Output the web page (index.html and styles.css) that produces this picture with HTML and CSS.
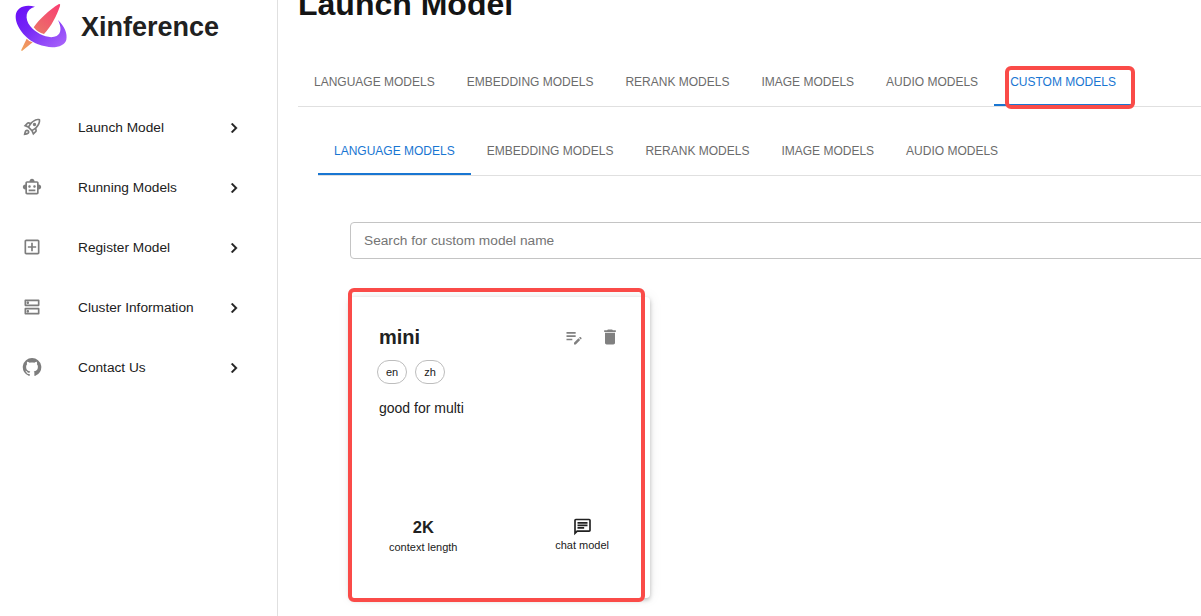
FILE: index.html
```html
<!DOCTYPE html>
<html lang="en">
<head>
<meta charset="utf-8">
<title>Xinference</title>
<link rel="stylesheet" href="styles.css">
</head>
<body>
<div class="app">
  <aside class="sidebar">
    <div class="brand">
      <svg class="logo" viewBox="40 6 165 150">
        <defs>
          <linearGradient id="ring" x1="0" y1="0" x2="1" y2="1"><stop offset="0" stop-color="#6a0cf8"/><stop offset=".4" stop-color="#7527f6"/><stop offset="1" stop-color="#ac68fa"/></linearGradient>
          <linearGradient id="needle" gradientUnits="userSpaceOnUse" x1="178" y1="10" x2="64" y2="152"><stop offset="0" stop-color="#fa3c72"/><stop offset=".5" stop-color="#ed696a"/><stop offset="1" stop-color="#f0a35c"/></linearGradient>
        </defs>
        <path fill="url(#ring)" d="M103 20C72 11 46 23 45 48C44 78 73 118 112 133C151 148 191 143 197 119C201 101 192 80 172 60C183 82 182 100 168 108C145 119 108 102 89 79C71 56 74 27 103 20Z"/>
        <path fill="url(#needle)" d="M175 12Q180 11 178 18C168 48 152 79 130 102Q111 98 99 82C118 56 145 30 175 12ZM78 116Q84 124 96 127L64 153Q61 153 62 149Z"/>
      </svg>
      <span class="brand-name">Xinference</span>
    </div>
    <nav class="menu">
      <a class="item"><svg class="icon" viewBox="0 0 24 24"><path d="M6 15c-.83 0-1.58.34-2.12.88C2.7 17.06 2 22 2 22s4.94-.7 6.12-1.88C8.66 19.58 9 18.83 9 18c0-1.66-1.34-3-3-3zm.71 3.71c-.28.28-2.17.76-2.17.76s.47-1.88.76-2.17c.17-.19.42-.3.7-.3.55 0 1 .45 1 1 0 .28-.11.53-.29.71zm10.71-5.06c6.36-6.36 4.24-11.31 4.24-11.31S16.71.22 10.35 6.58l-2.49-.5c-.65-.13-1.33.08-1.81.55L2 10.69l5 2.14L11.17 17l2.14 5 4.05-4.05c.47-.47.68-1.15.55-1.81l-.49-2.49zM7.41 10.83l-1.91-.82 1.97-1.97 1.44.29c-.57.83-1.08 1.7-1.5 2.5zm6.58 7.67-.82-1.91c.8-.42 1.67-.93 2.49-1.5l.29 1.44-1.96 1.97zM16 12.24c-1.32 1.32-3.38 2.4-4.04 2.73l-2.93-2.93c.32-.65 1.4-2.71 2.73-4.04 4.68-4.68 8.23-3.99 8.23-3.99s.69 3.55-3.99 8.23zM15 11c1.1 0 2-.9 2-2s-.9-2-2-2-2 .9-2 2 .9 2 2 2z"/></svg><span class="label">Launch Model</span><svg class="chevron" viewBox="0 0 24 24"><path d="M10 6 8.59 7.41 13.17 12l-4.58 4.59L10 18l6-6z"/></svg></a>
      <a class="item"><svg class="icon" viewBox="0 0 24 24"><path d="M20 9V7c0-1.1-.9-2-2-2h-3c0-1.66-1.34-3-3-3S9 3.34 9 5H6c-1.1 0-2 .9-2 2v2c-1.66 0-3 1.34-3 3s1.34 3 3 3v4c0 1.1.9 2 2 2h12c1.1 0 2-.9 2-2v-4c1.66 0 3-1.34 3-3s-1.34-3-3-3zm-2 10H6V7h12v12zm-9-6c-.83 0-1.5-.67-1.5-1.5S8.17 10 9 10s1.5.67 1.5 1.5S9.83 13 9 13zm7.5-1.5c0 .83-.67 1.5-1.5 1.5s-1.5-.67-1.5-1.5.67-1.5 1.5-1.5 1.5.67 1.5 1.5zM8 15h8v2H8v-2z"/></svg><span class="label">Running Models</span><svg class="chevron" viewBox="0 0 24 24"><path d="M10 6 8.59 7.41 13.17 12l-4.58 4.59L10 18l6-6z"/></svg></a>
      <a class="item"><svg class="icon" viewBox="0 0 24 24"><path d="M19 3H5c-1.11 0-2 .9-2 2v14c0 1.1.89 2 2 2h14c1.1 0 2-.9 2-2V5c0-1.1-.9-2-2-2zm0 16H5V5h14v14zm-8-2h2v-4h4v-2h-4V7h-2v4H7v2h4z"/></svg><span class="label">Register Model</span><svg class="chevron" viewBox="0 0 24 24"><path d="M10 6 8.59 7.41 13.17 12l-4.58 4.59L10 18l6-6z"/></svg></a>
      <a class="item"><svg class="icon" viewBox="0 0 24 24"><path d="M19 15v4H5v-4h14m1-2H4c-.55 0-1 .45-1 1v6c0 .55.45 1 1 1h16c.55 0 1-.45 1-1v-6c0-.55-.45-1-1-1zM7 18.5c-.82 0-1.5-.67-1.5-1.5s.68-1.5 1.5-1.5 1.5.67 1.5 1.5-.67 1.5-1.5 1.5zM19 5v4H5V5h14m1-2H4c-.55 0-1 .45-1 1v6c0 .55.45 1 1 1h16c.55 0 1-.45 1-1V4c0-.55-.45-1-1-1zM7 8.5c-.82 0-1.5-.67-1.5-1.5S6.18 5.5 7 5.5s1.5.68 1.5 1.5S7.83 8.5 7 8.5z"/></svg><span class="label">Cluster Information</span><svg class="chevron" viewBox="0 0 24 24"><path d="M10 6 8.59 7.41 13.17 12l-4.58 4.59L10 18l6-6z"/></svg></a>
      <a class="item"><svg class="icon" viewBox="0 0 24 24"><path d="M12 1.27a11 11 0 00-3.48 21.46c.55.09.73-.28.73-.55v-1.84c-3.03.64-3.67-1.46-3.67-1.46-.55-1.29-1.28-1.65-1.28-1.65-.92-.65.1-.65.1-.65 1.1 0 1.73 1.1 1.73 1.1.92 1.65 2.57 1.2 3.21.92a2 2 0 01.64-1.47c-2.47-.27-5.04-1.19-5.04-5.5 0-1.1.46-2.1 1.2-2.84a3.76 3.76 0 010-2.93s.91-.28 3.11 1.1c1.8-.49 3.7-.49 5.5 0 2.1-1.38 3.02-1.1 3.02-1.1a3.76 3.76 0 01.1 2.93c.83.74 1.2 1.74 1.2 2.94 0 4.21-2.57 5.13-5.04 5.4.45.37.82.92.82 2.02v3.03c0 .27.1.64.73.55A11 11 0 0012 1.27"/></svg><span class="label">Contact Us</span><svg class="chevron" viewBox="0 0 24 24"><path d="M10 6 8.59 7.41 13.17 12l-4.58 4.59L10 18l6-6z"/></svg></a>
    </nav>
  </aside>
  <main class="content">
    <h1 class="title">Launch Model</h1>
    <div class="tabs">
      <span class="tab">LANGUAGE MODELS</span>
      <span class="tab">EMBEDDING MODELS</span>
      <span class="tab">RERANK MODELS</span>
      <span class="tab">IMAGE MODELS</span>
      <span class="tab">AUDIO MODELS</span>
      <span class="tab active">CUSTOM MODELS<i class="mark mark-tab"></i></span>
    </div>
    <div class="panel">
      <div class="tabs">
        <span class="tab active">LANGUAGE MODELS</span>
        <span class="tab">EMBEDDING MODELS</span>
        <span class="tab">RERANK MODELS</span>
        <span class="tab">IMAGE MODELS</span>
        <span class="tab">AUDIO MODELS</span>
      </div>
      <div class="search">Search for custom model name</div>
      <article class="card">
        <header class="card-head">
          <h2 class="name">mini</h2>
          <svg class="action" viewBox="0 0 24 24"><path d="M3 10h11v2H3v-2zm0-2h11V6H3v2zm0 8h7v-2H3v2zm15.01-3.13.71-.71c.39-.39 1.02-.39 1.41 0l.71.71c.39.39.39 1.02 0 1.41l-.71.71-2.12-2.12zm-.71.71-5.3 5.3V21h2.12l5.3-5.3-2.12-2.12z"/></svg>
          <svg class="action" viewBox="0 0 24 24"><path d="M6 19c0 1.1.9 2 2 2h8c1.1 0 2-.9 2-2V7H6v12zM19 4h-3.5l-1-1h-5l-1 1H5v2h14V4z"/></svg>
        </header>
        <div class="chips"><span class="chip">en</span><span class="chip">zh</span></div>
        <p class="desc">good for multi</p>
        <footer class="stats">
          <div class="stat"><b class="value">2K</b><span class="caption">context length</span></div>
          <div class="stat"><svg class="chat" viewBox="0 0 24 24"><path d="M4 4h16v12H5.17L4 17.17V4m0-2c-1.1 0-1.99.9-1.99 2L2 22l4-4h14c1.1 0 2-.9 2-2V4c0-1.1-.9-2-2-2H4zm2 10h8v2H6v-2zm0-3h12v2H6V9zm0-3h12v2H6V6z"/></svg><span class="caption">chat model</span></div>
        </footer>
        <i class="mark mark-card"></i>
      </article>
    </div>
  </main>
</div>
</body>
</html>
```
FILE: styles.css
```css
* { box-sizing: border-box; }
body { margin: 0; background: #fff; color: #212121; font-family: "Liberation Sans", Arial, sans-serif; }
.app { display: flex; width: 100%; height: 616px; overflow: hidden; }
.sidebar { flex: none; width: 278px; border-right: 1px solid #e0e0e0; }
.brand { display: flex; align-items: center; gap: 12px; height: 54px; padding-left: 14px; }
.logo { width: 55px; height: 50px; }
.brand-name { font-size: 27px; font-weight: bold; line-height: 54px; }
.menu { display: flex; flex-direction: column; padding-top: 43px; }
.item { display: flex; align-items: center; height: 60px; padding: 0 33px 0 22px; }
.icon { width: 20px; height: 20px; fill: #7d7d7d; }
.label { flex: 1; padding: 1px 0 0 36px; font-size: 13.7px; line-height: 20px; }
.chevron { width: 20px; height: 20px; margin-top: 1px; fill: #212121; stroke: #212121; stroke-width: 0.4; }
.content { flex: 1; min-width: 0; padding-left: 20px; }
.title { margin: -15px 0 0; height: 73px; font-size: 32px; line-height: 38px; color: #141414; }
.tabs { display: flex; height: 49px; border-bottom: 1px solid #e0e0e0; }
.tab { position: relative; height: 48px; padding: 0 16px; font-size: 12px; line-height: 48px; color: #6c6c6c; white-space: nowrap; border-bottom: 2px solid transparent; }
.tab.active { color: #1976d2; border-bottom-color: #1976d2; }
.panel { padding: 20px 0 0 20px; }
.search { height: 37px; margin: 46px -10px 0 32px; padding-left: 13px; border: 1px solid #c4c4c4; border-radius: 4px; font-size: 13.7px; line-height: 35px; color: #757575; }
.card { position: relative; display: flex; flex-direction: column; width: 300px; height: 301px; margin: 38px 0 0 32px; padding: 28px 30px 0 27px; border-radius: 4px; box-shadow: 0 2px 4px rgba(0,0,0,.25), 0 0 14px rgba(0,0,0,.08); }
.card-head { display: flex; align-items: center; gap: 16px; height: 24px; padding-left: 2px; }
.name { flex: 1; margin: 0; font-size: 20px; line-height: 24px; }
.action { width: 20px; height: 20px; fill: #808080; }
.chips { display: flex; gap: 8px; margin-top: 11px; }
.chip { width: 30px; height: 24px; border: 1px solid #bdbdbd; border-radius: 12px; font-size: 11px; line-height: 23px; text-align: center; }
.desc { margin: 14px 0 0 2px; font-size: 14px; line-height: 20px; }
.stats { display: flex; justify-content: space-between; margin-top: 98px; padding: 0 11px 0 12px; }
.stat { display: flex; flex-direction: column; align-items: center; }
.value { font-size: 16.5px; line-height: 22px; }
.caption { font-size: 11px; line-height: 18px; }
.chat { width: 21px; height: 20px; margin-top: 1px; margin-bottom: -1px; fill: #212121; }
.mark { position: absolute; border: 4px solid #fa4b48; border-radius: 6px; pointer-events: none; }
.mark-tab { left: 11px; top: 8px; width: 130px; height: 43px; }
.mark-card { left: -2px; top: -9px; width: 297px; height: 314px; }
```
